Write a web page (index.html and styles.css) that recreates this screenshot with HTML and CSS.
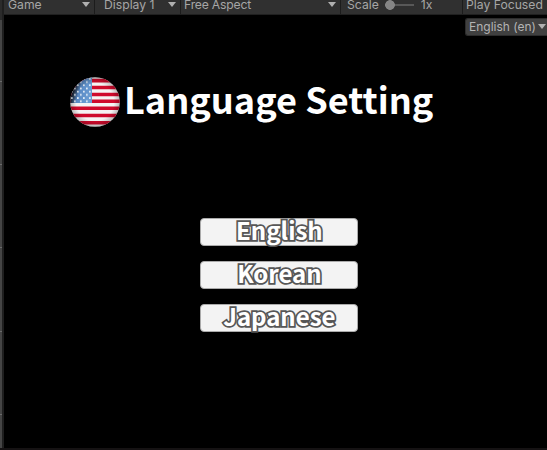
FILE: index.html
```html
<!DOCTYPE html>
<html lang="en">
<head>
<meta charset="utf-8">
<title>Language Setting</title>
<link rel="stylesheet" href="styles.css">
</head>
<body>
<div class="editor">
  <div class="dock"><i></i><i></i><i></i><i></i><i></i></div>
  <div class="view">
    <div class="toolbar">
      <div class="cell game"><span>Game</span><b class="arrow"></b></div>
      <div class="cell display"><span>Display 1</span><b class="arrow"></b></div>
      <div class="cell aspect"><span>Free Aspect</span><b class="arrow"></b></div>
      <div class="cell scale"><span>Scale</span><div class="slider"></div><span>1x</span></div>
      <div class="cell play"><span>Play Focused</span></div>
    </div>
    <div class="stage">
      <div class="locale"><span>English (en)</span><b class="arrow"></b></div>
      <div class="heading">
        <svg class="flag" viewBox="0 0 50 50">
          <defs>
            <clipPath id="disc"><circle cx="25" cy="25" r="24.8"/></clipPath>
            <pattern id="stars" width="6" height="6.4" patternUnits="userSpaceOnUse">
              <rect x="1" y="1" width="1.7" height="1.7" fill="#e8f0f8"/>
              <rect x="4" y="4.2" width="1.7" height="1.7" fill="#e8f0f8"/>
            </pattern>
            <linearGradient id="canton" x1="0" y1="0" x2="1" y2="0.35">
              <stop offset="0" stop-color="#10151f"/>
              <stop offset=".3" stop-color="#1c2432"/>
              <stop offset=".55" stop-color="#5a8ac4"/>
              <stop offset="1" stop-color="#6a9bd2"/>
            </linearGradient>
            <radialGradient id="shade">
              <stop offset=".75" stop-color="#000" stop-opacity="0"/>
              <stop offset="1" stop-color="#000" stop-opacity=".25"/>
            </radialGradient>
          </defs>
          <g clip-path="url(#disc)">
            <rect width="50" height="50" fill="#f5f3f3"/>
            <path d="M0 3.6H50M0 10.5H50M0 17.5H50M0 24.3H50M0 31.3H50M0 38.5H50M0 45.7H50" stroke="#cf0a2c" stroke-width="3.6"/>
            <rect width="22" height="26" fill="url(#canton)"/>
            <rect width="22" height="26" fill="url(#stars)"/>
            <rect width="50" height="50" fill="url(#shade)"/>
          </g>
        </svg>
        <h1>Language Setting</h1>
      </div>
      <div class="choices">
        <button><span>English</span></button>
        <button><span>Korean</span></button>
        <button><span>Japanese</span></button>
      </div>
    </div>
  </div>
</div>
</body>
</html>
```
FILE: styles.css
```css
* { box-sizing: border-box; }
body { margin: 0; background: #151213; overflow: hidden; }
.editor { display: flex; width: 547px; height: 448px; }
.dock { width: 4px; flex: none; border-right: 2px solid #1f1f1f; padding-top: 81px;
  background: linear-gradient(#2b2b2b 20px, #454545 20px); }
.dock i { display: block; height: 1px; margin-bottom: 82.2px; background: #6a6a6a; }
.view { width: 543px; display: flex; flex-direction: column; }
.toolbar { display: flex; height: 15px; background: #303030; border-bottom: 1px solid #202020;
  font: 12.2px/10px Inter, sans-serif; color: #a6a6a6; white-space: nowrap; }
.cell { display: flex; justify-content: space-between; height: 14px; border-right: 1px solid #1c1c1c; }
.arrow { width: 0; height: 0; border: 4px solid transparent; border-top: 5px solid #b0b0b0; border-bottom: 0; }
.cell .arrow { margin-top: 2px; }
.game { width: 91px; padding: 0 4px; }
.display { width: 86px; padding: 0 4px 0 9px; }
.aspect { width: 160px; padding: 0 4px 0 3px; letter-spacing: -.2px; }
.scale { width: 122px; padding-left: 6px; justify-content: flex-start; }
.slider { width: 29px; height: 10px; margin: 0 7px 0 6px;
  background: radial-gradient(circle at 5px 5px, #858585 4.5px, transparent 5.2px), linear-gradient(#585858, #585858) 0 4px / 29px 2px no-repeat; }
.play { width: 84px; padding-left: 3px; border: 0; }
.stage { display: flow-root; height: 433px; background: #000; }
.locale { display: flex; justify-content: space-between; width: 82px; height: 18px; margin: 3px 0 0 auto;
  padding: 0 1px 0 3px; background: #404040; border: 1px solid #2c2c2c; border-right: 0; border-radius: 3px 0 0 3px;
  font: 12px/16px Inter, sans-serif; color: #b4b4b4; white-space: nowrap; }
.locale .arrow { margin-top: 5px; }
.heading { display: flex; height: 50px; margin: 41px 0 0 66px; }
.flag { width: 50px; height: 50px; flex: none; }
h1 { margin: 0 0 0 4px; font: bold 36.1px/42px "Noto Sans CJK KR", sans-serif; color: #fff; white-space: nowrap; }
.choices { display: flex; flex-direction: column; gap: 15px; width: 158px; margin: 91px 0 0 196.4px; }
button { display: flex; justify-content: center; align-items: flex-start; height: 28px; padding: 0; background: #f3f3f3;
  border: 1px solid #aaa; border-radius: 4px; }
button span { font: bold 24px/22px "Noto Sans CJK KR", sans-serif; color: #fff;
  -webkit-text-stroke: 3.6px #555; paint-order: stroke fill; text-shadow: 0 0 1px #777; }
```
